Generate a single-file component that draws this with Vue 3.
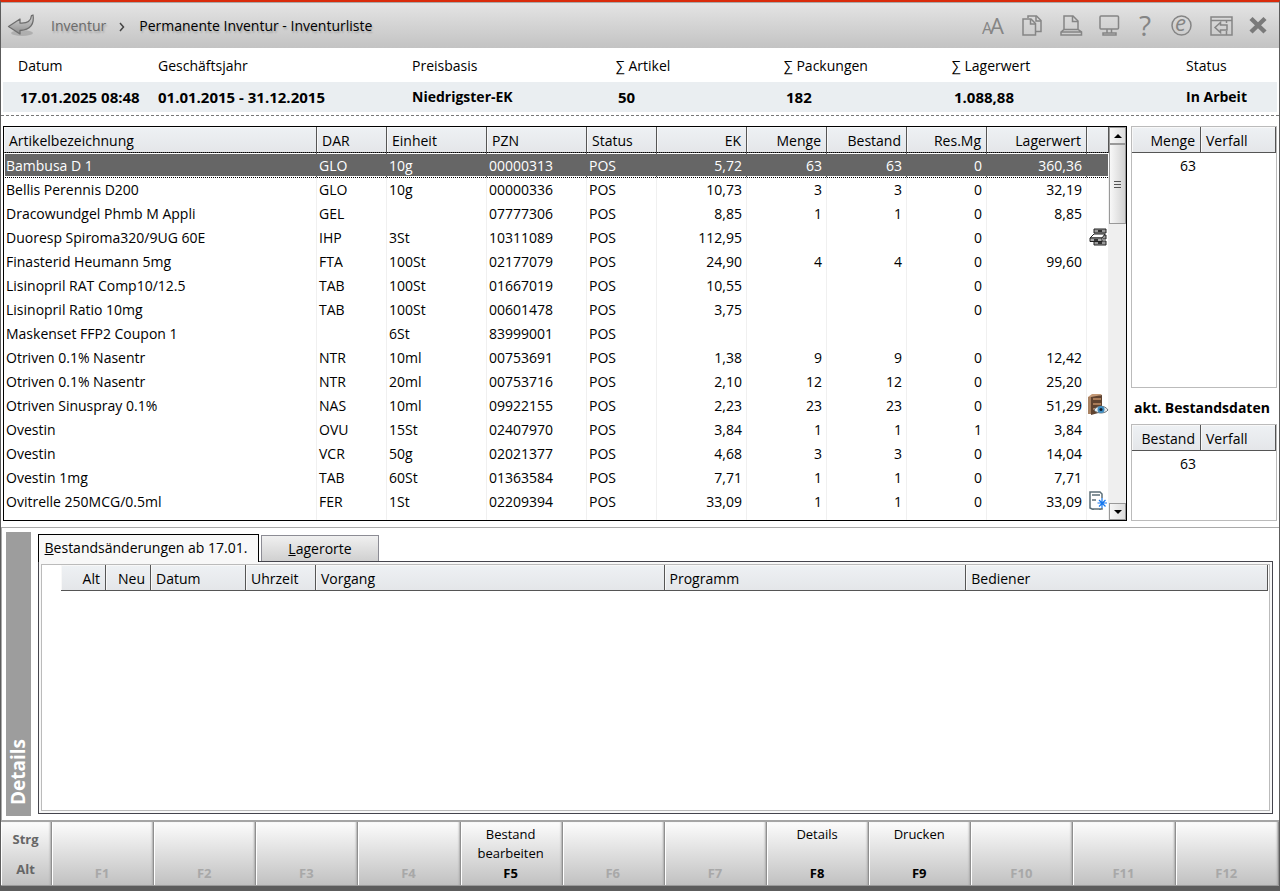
<template>
    <div class="window">
        <header class="titlebar">
            <button type="button" class="back" aria-label="Zurück">
                <svg width="32" height="32" viewBox="0 0 32 32">
                    <defs>
                        <linearGradient id="arrowFill" x1="0" y1="0" x2="0" y2="1">
                            <stop offset="0" stop-color="#d8d8d8" />
                            <stop offset="1" stop-color="#8c8c8c" />
                        </linearGradient>
                    </defs>
                    <ellipse cx="17" cy="23" rx="11" ry="3" fill="#000" opacity="0.15" />
                    <path d="M3.500 16.500 L15 9 V13 C22 13.500 26 11 26.500 5.500 L28 5 C29.500 14 25.500 20 15 20.500 V24 Z" fill="url(#arrowFill)" stroke="#6e6e6e" stroke-width="1.300" stroke-linejoin="round" />
                </svg>
            </button>
            <nav class="crumbs">
                <a href="#" class="crumb">Inventur</a>
                <svg class="chevron" width="6" height="10" viewBox="0 0 6 10"><path d="M1 1 L4.500 5 L1 9" fill="none" stroke="#444" stroke-width="1.500" /></svg>
                <h1>Permanente Inventur - Inventurliste</h1>
            </nav>
            <div class="tools">
                <button type="button" aria-label="Schriftgröße">
                    <svg width="38" height="45" viewBox="0 0 38 45">
                        <text x="9" y="31" font-size="16">A</text>
                        <text x="17" y="31" font-size="22">A</text>
                    </svg>
                </button>
                <button type="button" aria-label="Kopieren">
                    <svg class="line" width="38" height="45" viewBox="0 0 38 45">
                        <path d="M17 15 V13 H25.500 L30 17.500 V28.500 H25" />
                        <path d="M25 13 V18 H30" />
                        <path d="M12 16 H20 L24.500 20.500 V32 H12 Z" />
                        <path d="M19.500 16 V21 H24.500" />
                    </svg>
                </button>
                <button type="button" aria-label="Drucken">
                    <svg class="line" width="38" height="45" viewBox="0 0 38 45">
                        <path d="M15 26 V13 H24 L29 18 V26" />
                        <path d="M23.500 13 V18.500 H29" />
                        <path d="M15 26.500 H29 L32.500 29 V32 H12 V29 Z M12 29 H32.500" />
                    </svg>
                </button>
                <button type="button" aria-label="Bildschirm">
                    <svg class="line" width="38" height="45" viewBox="0 0 38 45">
                        <rect x="13" y="13" width="18.500" height="13" rx="1" />
                        <path d="M20 26 V30 M24.500 26 V30 M16 30 H29 V32 H16 Z" />
                    </svg>
                </button>
                <button type="button" aria-label="Hilfe">
                    <svg width="38" height="45" viewBox="0 0 38 45">
                        <text x="14" y="33" font-size="28">?</text>
                    </svg>
                </button>
                <button type="button" aria-label="Internet">
                    <svg width="38" height="45" viewBox="0 0 38 45">
                        <circle cx="18.500" cy="22.500" r="9.500" fill="none" stroke="#858585" stroke-width="1.500" />
                        <text x="12" y="28" font-size="22" font-style="italic">e</text>
                    </svg>
                </button>
                <button type="button" aria-label="Fenster andocken">
                    <svg class="line" width="38" height="45" viewBox="0 0 38 45">
                        <path d="M10 14 H31 V32 H10 Z M10 17.500 H31 M25.500 17.500 V20 M25.500 28 V32" />
                        <path d="M14 24.500 L19.500 19.500 V22 H26 V27 H19.500 V29.500 Z" />
                    </svg>
                </button>
                <button type="button" aria-label="Schließen">
                    <svg width="38" height="45" viewBox="0 0 38 45">
                        <path d="M12 15.500 L26 29 M26 15.500 L12 29" fill="none" stroke="#7a7a7a" stroke-width="4.500" />
                    </svg>
                </button>
            </div>
        </header>

        <dl class="summary">
            <div v-for="item in summary" :key="item.label" :class="item.type">
                <dt>{{ item.label }}</dt>
                <dd>{{ item.value }}</dd>
            </div>
        </dl>

        <main class="lists">
            <div class="list">
                <table class="articles">
                    <colgroup>
                        <col />
                        <col class="w70" />
                        <col class="w100" />
                        <col class="w100" />
                        <col class="w70" />
                        <col class="w90" />
                        <col class="w80" />
                        <col class="w80" />
                        <col class="w80" />
                        <col class="w100" />
                        <col class="w22" />
                    </colgroup>
                    <thead>
                        <tr>
                            <th v-for="(col, i) in columns" :key="col" :class="{ num: i > 4 }">{{ col }}</th>
                            <th></th>
                        </tr>
                    </thead>
                    <tbody>
                        <tr v-for="(row, i) in articles" :key="row[3]" :class="{ selected: i === selected }" @click="selected = i">
                            <td v-for="(cell, c) in row.slice(0, 10)" :key="c" :class="{ num: c > 4 }">{{ cell }}</td>
                            <td class="icon">
                                <svg v-if="row[10] === 'robot'" width="18" height="18" viewBox="0 0 18 18">
                                    <path d="M5 1 H17 V5 H5 Z M5 13 H17 V17 H5 Z M12 7 H17 V11 H14" fill="#999" stroke="#222" />
                                    <path d="M1 10 L5 6 H16 L13 10 Z" fill="#fff" stroke="#222" />
                                    <path d="M1 10 H13 V13.500 H1 Z" fill="#aaa" stroke="#222" />
                                    <path d="M9 3 H13 M5 12 H9 M9 15 H13" stroke="#111" stroke-width="1.500" />
                                </svg>
                                <svg v-else-if="row[10] === 'cabinet'" width="22" height="22" viewBox="0 0 22 22">
                                    <path d="M1 3 L5 0 H15 L11 3 Z" fill="#c49a78" />
                                    <path d="M1 3 H5 V20 H1 Z" fill="#a98262" />
                                    <path d="M4 3 L15 1 V18 L4 21 Z" fill="#5f4330" />
                                    <path d="M6 5 H14 M6 10 H14 M6 15 H10" stroke="#a87b58" stroke-width="2" />
                                    <path d="M7 16 C10 11 18 11 21 16 C18 20 10 20 7 16 Z" fill="#e8edf0" stroke="#6c7478" />
                                    <circle cx="14" cy="15.500" r="3.500" fill="#3e8cc0" />
                                    <circle cx="14" cy="15.500" r="1.500" fill="#102030" />
                                </svg>
                                <svg v-else-if="row[10] === 'fridge'" width="20" height="20" viewBox="0 0 20 20">
                                    <path d="M2 1 H12 L14 3 V18 H4 L2 17 Z" fill="#fff" stroke="#5c6f78" stroke-width="1.500" />
                                    <path d="M4 4 H12 M4 9 H8 M5 18 V19 M12 18 V19" fill="none" stroke="#5c6f78" stroke-width="1.500" />
                                    <path d="M14 7 V17 M9.500 12 H19 M11 9 L17.500 15.500 M17.500 9 L11 15.500" stroke="#fff" stroke-width="3" />
                                    <path d="M14 7 V17 M9.500 12 H19 M11 9 L17.500 15.500 M17.500 9 L11 15.500" stroke="#1577ee" stroke-width="1.200" />
                                </svg>
                            </td>
                        </tr>
                        <tr class="rest"><td v-for="n in 11" :key="n"></td></tr>
                    </tbody>
                </table>
                <div class="scrollbar">
                    <button type="button" aria-label="Nach oben"><svg width="8" height="4" viewBox="0 0 8 4"><path d="M0 4 L4 0 L8 4 Z" /></svg></button>
                    <div class="thumb"><i></i><i></i><i></i></div>
                    <button type="button" class="down" aria-label="Nach unten"><svg width="8" height="4" viewBox="0 0 8 4"><path d="M0 0 L4 4 L8 0 Z" /></svg></button>
                </div>
            </div>

            <aside class="side">
                <div class="box grow">
                    <table>
                        <thead><tr><th class="num">Menge</th><th>Verfall</th></tr></thead>
                        <tbody><tr><td class="num">63</td><td></td></tr></tbody>
                    </table>
                </div>
                <h2>akt. Bestandsdaten</h2>
                <div class="box">
                    <table>
                        <thead><tr><th class="num">Bestand</th><th>Verfall</th></tr></thead>
                        <tbody><tr><td class="num">63</td><td></td></tr></tbody>
                    </table>
                </div>
            </aside>
        </main>

        <section class="details">
            <div class="details-label"><span>Details</span></div>
            <div class="details-body">
                <div class="tabs" role="tablist">
                    <button type="button" role="tab" class="tab wide" :class="{ active: tab === 0 }" :aria-selected="tab === 0" @click="tab = 0"><u>B</u>estandsänderungen ab 17.01.</button>
                    <button type="button" role="tab" class="tab" :class="{ active: tab === 1 }" :aria-selected="tab === 1" @click="tab = 1"><u>L</u>agerorte</button>
                </div>
                <div class="panel">
                    <div class="panel-inner">
                        <table class="changes">
                            <colgroup>
                                <col class="w45" />
                                <col class="w45" />
                                <col class="w95" />
                                <col class="w70" />
                                <col />
                                <col class="w25p" />
                                <col class="w25p" />
                            </colgroup>
                            <thead>
                                <tr>
                                    <th class="num">Alt</th>
                                    <th class="num">Neu</th>
                                    <th>Datum</th>
                                    <th>Uhrzeit</th>
                                    <th>Vorgang</th>
                                    <th>Programm</th>
                                    <th>Bediener</th>
                                </tr>
                            </thead>
                        </table>
                    </div>
                </div>
            </div>
        </section>

        <footer class="keys">
            <div class="modifiers">
                <button type="button">Strg</button>
                <button type="button">Alt</button>
            </div>
            <button v-for="n in 12" :key="n" type="button" class="key" :disabled="!actions[n]">
                <span>{{ actions[n] }}</span>
                <b>F{{ n }}</b>
            </button>
        </footer>
    </div>
</template>

<script setup>
import { ref } from 'vue';

const selected = ref(0);
const tab = ref(0);

const summary = [
    { label: 'Datum', value: '17.01.2025 08:48', type: 'date' },
    { label: 'Geschäftsjahr', value: '01.01.2015 - 31.12.2015', type: 'date' },
    { label: 'Preisbasis', value: 'Niedrigster-EK' },
    { label: '∑ Artikel', value: '50', type: 'sum' },
    { label: '∑ Packungen', value: '182', type: 'sum' },
    { label: '∑ Lagerwert', value: '1.088,88', type: 'sum' },
    { label: 'Status', value: 'In Arbeit' },
];

const columns = ['Artikelbezeichnung', 'DAR', 'Einheit', 'PZN', 'Status', 'EK', 'Menge', 'Bestand', 'Res.Mg', 'Lagerwert'];

const articles = [
    ['Bambusa D 1', 'GLO', '10g', '00000313', 'POS', '5,72', '63', '63', '0', '360,36'],
    ['Bellis Perennis D200', 'GLO', '10g', '00000336', 'POS', '10,73', '3', '3', '0', '32,19'],
    ['Dracowundgel Phmb M Appli', 'GEL', '', '07777306', 'POS', '8,85', '1', '1', '0', '8,85'],
    ['Duoresp Spiroma320/9UG 60E', 'IHP', '3St', '10311089', 'POS', '112,95', '', '', '0', '', 'robot'],
    ['Finasterid Heumann 5mg', 'FTA', '100St', '02177079', 'POS', '24,90', '4', '4', '0', '99,60'],
    ['Lisinopril RAT Comp10/12.5', 'TAB', '100St', '01667019', 'POS', '10,55', '', '', '0', ''],
    ['Lisinopril Ratio 10mg', 'TAB', '100St', '00601478', 'POS', '3,75', '', '', '0', ''],
    ['Maskenset FFP2 Coupon 1', '', '6St', '83999001', 'POS', '', '', '', '', ''],
    ['Otriven 0.1% Nasentr', 'NTR', '10ml', '00753691', 'POS', '1,38', '9', '9', '0', '12,42'],
    ['Otriven 0.1% Nasentr', 'NTR', '20ml', '00753716', 'POS', '2,10', '12', '12', '0', '25,20'],
    ['Otriven Sinuspray 0.1%', 'NAS', '10ml', '09922155', 'POS', '2,23', '23', '23', '0', '51,29', 'cabinet'],
    ['Ovestin', 'OVU', '15St', '02407970', 'POS', '3,84', '1', '1', '1', '3,84'],
    ['Ovestin', 'VCR', '50g', '02021377', 'POS', '4,68', '3', '3', '0', '14,04'],
    ['Ovestin 1mg', 'TAB', '60St', '01363584', 'POS', '7,71', '1', '1', '0', '7,71'],
    ['Ovitrelle 250MCG/0.5ml', 'FER', '1St', '02209394', 'POS', '33,09', '1', '1', '0', '33,09', 'fridge'],
];

const actions = { 5: 'Bestand bearbeiten', 8: 'Details', 9: 'Drucken' };
</script>

<style>
body {
    margin: 0;
    background: #fff;
}
</style>

<style scoped>
.window {
    min-height: 100vh;
    box-sizing: border-box;
    display: flex;
    flex-direction: column;
    border: 1px solid #5c5c5c;
    border-top: 2px solid #d92b0b;
    border-bottom: 5px solid #5c5c5c;
    background: #fff;
    color: #000;
    font-family: "Open Sans", "Noto Sans", sans-serif;
    font-size: 14px;
    line-height: 20px;
}

button {
    font: inherit;
    color: inherit;
    padding: 0;
    border: none;
    background: none;
}

/* title bar */
.titlebar {
    display: flex;
    align-items: center;
    height: 45px;
    padding-right: 2px;
    border-top: 1px solid #a9a9a9;
    background: linear-gradient(#e4e4e4, #c3c3c3);
}

.back {
    width: 32px;
    height: 32px;
    margin-left: 4px;
}

.crumbs {
    display: flex;
    align-items: center;
    flex: 1;
    margin-left: 14px;
    text-shadow: 1px 2px 2px rgba(0, 0, 0, 0.2);
}

.crumb {
    color: #6a6a6a;
    text-decoration: none;
}

.chevron {
    margin: 2px 14px 0 13px;
}

.crumbs h1 {
    margin: 0;
    font-size: 14px;
    font-weight: 400;
}

.tools {
    display: flex;
}

.tools button,
.back {
    display: flex;
}

.tools text {
    fill: #858585;
    font-family: "Open Sans", sans-serif;
    font-weight: 400;
}

.line {
    fill: none;
    stroke: #858585;
    stroke-width: 1.5;
}

/* summary */
.summary {
    display: grid;
    grid-template-columns: 155fr 254fr 204fr 168fr 168fr 234fr 91fr;
    margin: 0;
    padding: 0 2px 3px;
    border-bottom: 1px dashed #777;
}

.summary dt {
    line-height: 33px;
    padding-top: 1px;
}

.summary dd {
    margin: 0;
    height: 30px;
    line-height: 30px;
    background: #eaeef1;
    font-weight: 700;
    white-space: nowrap;
}

.summary .date dd,
.summary .sum dd {
    font-size: 15px;
}

.summary .sum dd {
    padding-left: 2px;
}

.summary div:first-child dt {
    padding-left: 15px;
}

.summary div:first-child dd {
    padding-left: 17px;
}

/* tables */
table {
    width: 100%;
    table-layout: fixed;
    border-collapse: separate;
    border-spacing: 0;
}

th {
    box-sizing: border-box;
    height: 26px;
    padding: 2px 5px 0;
    border-right: 1px solid #555;
    border-bottom: 1px solid #555;
    background: linear-gradient(#eef1f4, #e4e6e9);
    box-shadow: inset 1px 1px 0 #f8f8f8;
    font-weight: 400;
    text-align: left;
    white-space: nowrap;
}

td {
    box-sizing: border-box;
    height: 24px;
    padding: 2px 4px 0 2px;
    white-space: nowrap;
}

th.num,
td.num {
    text-align: right;
}

.w22 { width: 22px; }
.w45 { width: 45px; }
.w70 { width: 70px; }
.w80 { width: 80px; }
.w90 { width: 90px; }
.w95 { width: 95px; }
.w100 { width: 100px; }
.w25p { width: 25%; }

.lists {
    display: flex;
    gap: 4px;
    padding: 10px 2px 6px;
}

.list {
    flex: 1;
    display: flex;
    border: 1px solid #000;
}

.articles {
    flex: 1;
}

.articles td {
    border-right: 1px solid #f0f0f0;
}

.articles td.icon {
    padding: 0;
}

.icon svg {
    display: block;
    margin: 0 auto;
}

.articles .rest td {
    height: 7px;
    padding: 0;
}

.articles .selected {
    outline: 1px dotted #000;
}

.articles .selected td {
    border-right-color: #666;
    background: #666;
    color: #fff;
    box-shadow: inset 0 1px 0 #fff, inset 0 -1px 0 #fff;
}

.articles .selected td:first-child {
    box-shadow: inset 1px 1px 0 #fff, inset 0 -1px 0 #fff;
}

.articles .selected td:last-child {
    border-right-color: #fff;
}

.scrollbar {
    width: 17px;
    display: flex;
    flex-direction: column;
    background: #efefef;
}

.scrollbar button {
    display: flex;
    align-items: center;
    justify-content: center;
    height: 17px;
    border: 1px solid #999;
    background: linear-gradient(90deg, #f6f6f6, #ddd);
}

.scrollbar .down {
    margin-top: auto;
}

.thumb {
    display: flex;
    flex-direction: column;
    align-items: center;
    justify-content: center;
    gap: 2px;
    height: 78px;
    border: 1px solid #999;
    background: linear-gradient(90deg, #f8f8f8, #d2d2d2);
}

.thumb i {
    width: 7px;
    height: 1px;
    background: #555;
}

.side {
    width: 146px;
    display: flex;
    flex-direction: column;
}

.box {
    height: 95px;
    border: 1px solid #bbb;
}

.box.grow {
    height: auto;
    flex: 1;
}

.box th:first-child {
    width: 69px;
}

.box td.num {
    padding-right: 5px;
}

.side h2 {
    margin: 0;
    padding: 3px 3px 0;
    font-size: 14px;
    line-height: 33px;
    white-space: nowrap;
}

/* details */
.details {
    flex: 1;
    display: flex;
    gap: 7px;
    padding: 4px 6px 4px 4px;
    border-top: 1px solid #aaa;
    border-left: 1px solid #aaa;
}

.details-label {
    width: 25px;
    display: flex;
    background: #9d9d9d;
    color: #fff;
    font-size: 19px;
    font-weight: 700;
    line-height: 25px;
}

.details-label span {
    writing-mode: vertical-rl;
    transform: rotate(180deg);
    padding-top: 11px;
}

.details-body {
    flex: 1;
    display: flex;
    flex-direction: column;
    padding: 2px 0;
}

.tabs {
    display: flex;
    align-items: flex-end;
    gap: 2px;
}

.tab {
    position: relative;
    height: 26px;
    width: 118px;
    border: 1px solid #8c8c94;
    border-bottom: none;
    background: linear-gradient(#f0f0f0, #d0d0d0);
}

.tab.wide {
    width: 221px;
    padding: 0 5px 0 0;
}

.tab.active {
    z-index: 1;
    height: 28px;
    margin-bottom: -1px;
    padding-bottom: 2px;
    border-color: #000;
    background: #f8f8f8;
}

.panel {
    flex: 1;
    display: flex;
    padding: 2px;
    border: 1px solid #45454d;
    background: #f8f8f8;
}

.panel-inner {
    flex: 1;
    padding: 0 1px 0 19px;
    border: 1px solid #bbb;
    background: #fff;
}

/* function keys */
.keys {
    display: flex;
    height: 63px;
    border-top: 2px solid #a5a5a5;
    border-bottom: 1px solid #999;
}

.modifiers,
.key {
    display: flex;
    flex-direction: column;
    align-items: center;
    box-sizing: border-box;
    border-right: 1px solid #8f8f8f;
    border-left: 1px solid #fff;
    background: linear-gradient(#fcfcfc, #c1c1c1);
    box-shadow: inset -2px 0 2px -1px #aaa;
}

.modifiers {
    width: 51px;
    justify-content: space-between;
    padding: 7px 2px 6px 0;
    color: #666;
    font-size: 13px;
    font-weight: 700;
}

.key {
    flex: 102;
    justify-content: space-between;
    padding: 3px 16px 3px 14px;
    font-size: 13px;
    line-height: 19px;
}

.key:last-child {
    flex: 104;
}

.key b {
    line-height: 18px;
}

.key:disabled {
    color: #a8a8a8;
}
</style>
